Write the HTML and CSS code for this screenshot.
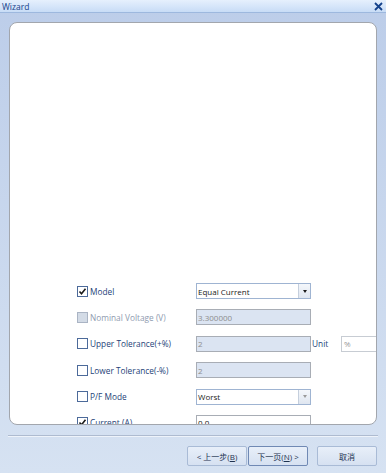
FILE: index.html
```html
<!DOCTYPE html>
<html lang="en">
<head>
  <meta charset="UTF-8"/>
  <title>Wizard</title>
  <link rel="stylesheet" href="styles.css">
</head>
<body>
  <div class="window">
    <!-- Title bar -->
    <div class="titlebar">
      <span class="title">Wizard</span>
      <svg class="close" width="9" height="9" viewBox="0 0 9 9"><path d="M1 1 L8 8 M8 1 L1 8" stroke="#15428b" stroke-width="1.8"/></svg>
    </div>

    <div class="client">
      <!-- Rounded white page -->
      <div class="page">
        <div class="form">
          <label class="check"><span class="box checked"><svg width="9" height="9" viewBox="0 0 9 9"><path d="M1.5 4.5 L3.5 6.8 L7.5 1.8" fill="none" stroke="#1a1a1a" stroke-width="1.6"/></svg></span>Model</label>
          <div class="combo"><span class="value">Equal Current</span><span class="drop"><i></i></span></div>
          <span></span><span></span>

          <label class="check disabled"><span class="box"></span>Nominal Voltage (V)</label>
          <div class="field readonly">3.300000</div>
          <span></span><span></span>

          <label class="check"><span class="box"></span>Upper Tolerance(+%)</label>
          <div class="field readonly">2</div>
          <span class="unit">Unit</span>
          <div class="field unit-field">%</div>

          <label class="check"><span class="box"></span>Lower Tolerance(-%)</label>
          <div class="field readonly">2</div>
          <span></span><span></span>

          <label class="check"><span class="box"></span>P/F Mode</label>
          <div class="combo"><span class="value">Worst</span><span class="drop off"><i></i></span></div>
          <span></span><span></span>

          <label class="check"><span class="box checked"><svg width="9" height="9" viewBox="0 0 9 9"><path d="M1.5 4.5 L3.5 6.8 L7.5 1.8" fill="none" stroke="#1a1a1a" stroke-width="1.6"/></svg></span>Current (A)</label>
          <div class="field">0.0</div>
          <span></span><span></span>
        </div>
      </div>

      <!-- Footer with navigation buttons -->
      <div class="rule"></div>
      <div class="buttons">
        <button class="btn">&lt; 上一步(<u>B</u>)</button>
        <button class="btn focus">下一页(<u>N</u>) &gt;</button>
        <button class="btn cancel">取消</button>
      </div>
    </div>
  </div>
</body>
</html>
```

FILE: styles.css
```css
body {
  margin: 0;
  font-family: "Open Sans", "Noto Sans CJK SC", sans-serif;
}
.window {
  width: 386px;
  height: 473px;
  background: linear-gradient(#bccde9, #d6e2f2);
  overflow: hidden;
}
/* Title bar */
.titlebar {
  height: 12px;
  display: flex;
  align-items: center;
  justify-content: space-between;
  padding: 0 3px 0 2px;
  background: linear-gradient(#e6f0fd, #c8dcf6);
  border-bottom: 1px solid #9db8de;
}
.title {
  font-size: 8.5px;
  color: #15428b;
}
.close {
  display: block;
}
.client {
  padding: 9px 9px 0 9px;
}
/* White page with rounded corners */
.page {
  width: 366px;
  height: 401px;
  background: #fff;
  border: 1px solid #a2a6ad;
  border-radius: 8px;
  overflow: hidden;
}
.form {
  display: grid;
  grid-template-columns: 119px 115px 30px 60px;
  grid-auto-rows: 16px;
  row-gap: 10.4px;
  align-items: center;
  padding: 260px 0 0 67px;
  font-size: 8px;
}
.check {
  display: flex;
  align-items: center;
  gap: 2px;
  color: #1e3f78;
  font-size: 8.3px;
}
.check.disabled {
  color: #8f9bb0;
}
.box {
  width: 9px;
  height: 9px;
  border: 1px solid #4c6a9a;
  background: #fff;
  display: flex;
  align-items: center;
  justify-content: center;
}
.check.disabled .box {
  background: #d3dbe6;
  border-color: #aab4c4;
}
.field, .combo {
  height: 14px;
  border: 1px solid #a8adb5;
  background: #fff;
  color: #1a1a1a;
  display: flex;
  align-items: center;
  padding-left: 1px;
  box-sizing: content-box;
  width: 112px;
}
.field.readonly {
  background: #dbe4f2;
  color: #8d8d8d;
}
.unit {
  color: #1e3f78;
  font-size: 8.3px;
  padding-left: 1px;
}
.unit-field {
  width: 60px;
  color: #999;
  border-color: #c7ccd3;
  padding-left: 2px;
}
.combo {
  border-color: #9fb4d2;
  justify-content: space-between;
  padding-right: 0;
}
.drop {
  width: 11px;
  height: 14px;
  border-left: 1px solid #c5cfdd;
  background: linear-gradient(#f4f7fb, #dfe6f0);
  display: flex;
  align-items: center;
  justify-content: center;
}
.drop i {
  width: 0;
  height: 0;
  border-left: 2.5px solid transparent;
  border-right: 2.5px solid transparent;
  border-top: 3px solid #1a1a1a;
}
.drop.off i {
  border-top-color: #9a9a9a;
}
/* Footer */
.rule {
  height: 1px;
  margin: 10px -1px 0 -1px;
  background: #aebbd0;
  border-bottom: 1px solid #eef3fa;
}
.buttons {
  display: flex;
  justify-content: flex-end;
  gap: 1px;
  margin-top: 9px;
}
.btn {
  width: 60px;
  height: 20px;
  padding: 0;
  font-family: "Open Sans", "Noto Sans CJK SC", sans-serif;
  font-size: 8px;
  color: #1e3250;
  background: linear-gradient(#e8eff9, #d6e1f1);
  border: 1px solid #a9bbd6;
  border-radius: 2px;
}
.btn.focus {
  border-color: #7089b4;
}
.btn.cancel {
  margin-left: 8px;
}
```
